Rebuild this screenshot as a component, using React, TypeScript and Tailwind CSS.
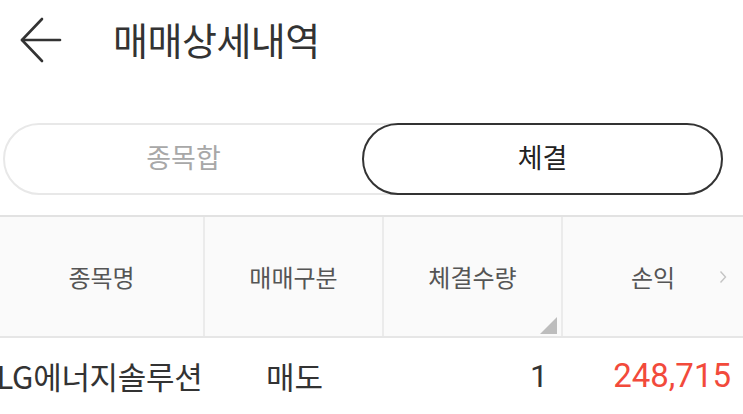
const font = { fontFamily: '"Noto Sans CJK KR", Roboto, "Noto Sans", sans-serif' };
const num = { fontFamily: 'Roboto, "Noto Sans CJK KR", sans-serif' };

function BackArrow() {
  return (
    <svg width="44" height="46" viewBox="0 0 44 46" fill="none" stroke="#333" strokeWidth="2.6" strokeLinecap="round" strokeLinejoin="round">
      <path d="M41 23H3" />
      <path d="M23 2L3 23l20 21" />
    </svg>
  );
}

export default function App() {
  return (
    <div className="w-[743px] h-[414px] overflow-hidden bg-white" style={font}>
      <header className="h-[84px] flex items-center">
        <div className="w-[113px] pl-[19px] -mt-[5px] flex items-center">
          <BackArrow />
        </div>
        <h1 className="text-[38px] text-[#333] tracking-[-0.5px] leading-none -mt-[6px]">매매상세내역</h1>
      </header>

      <div className="px-[3px] pt-[39px]">
        <div className="w-[720px] h-[72px] rounded-full border-2 border-[#e8e8e8] flex">
          <button className="flex-1 text-[27px] text-[#a8a8a8] flex items-center justify-center -mt-[3px]">종목합</button>
          <button className="w-[361px] -my-[2px] -mr-[2px] rounded-full border-2 border-[#333] text-[27px] text-[#222] flex items-center justify-center">
            <span className="-mt-[3px]">체결</span>
          </button>
        </div>
      </div>

      <div className="mt-[20px] border-t-2 border-[#e2e2e2]">
        <div className="grid grid-cols-[205px_179px_179px_1fr] h-[121px] bg-[#fafafa] border-b-2 border-[#e6e6e6] text-[24px] text-[#555]">
          <div className="flex items-center justify-center border-r-2 border-[#ebebeb]">종목명</div>
          <div className="flex items-center justify-center border-r-2 border-[#ebebeb]">매매구분</div>
          <div className="relative flex items-center justify-center border-r-2 border-[#ebebeb]">
            체결수량
            <div className="absolute right-[4px] bottom-[2px] w-0 h-0 border-l-[17px] border-l-transparent border-b-[17px] border-b-[#bdbdbd]" />
          </div>
          <div className="relative flex items-center justify-center">
            손익
            <svg className="absolute right-[16px] top-1/2 -translate-y-1/2" width="8" height="14" viewBox="0 0 8 14" fill="none" stroke="#c4c4c4" strokeWidth="1.4">
              <path d="M1.5 1.5L6.5 7l-5 5.5" />
            </svg>
          </div>
        </div>

        <div className="grid grid-cols-[205px_179px_179px_1fr] h-[76px] text-[31px] text-[#333] items-center">
          <div className="flex justify-center overflow-visible whitespace-nowrap -ml-[6px] tracking-[-0.3px]">LG에너지솔루션</div>
          <div className="text-center">매도</div>
          <div className="text-right pr-[15px] text-[32px]" style={num}>1</div>
          <div className="text-right pr-[12px] text-[33px] text-[#f24a3b]" style={num}>248,715</div>
        </div>
      </div>
    </div>
  );
}
